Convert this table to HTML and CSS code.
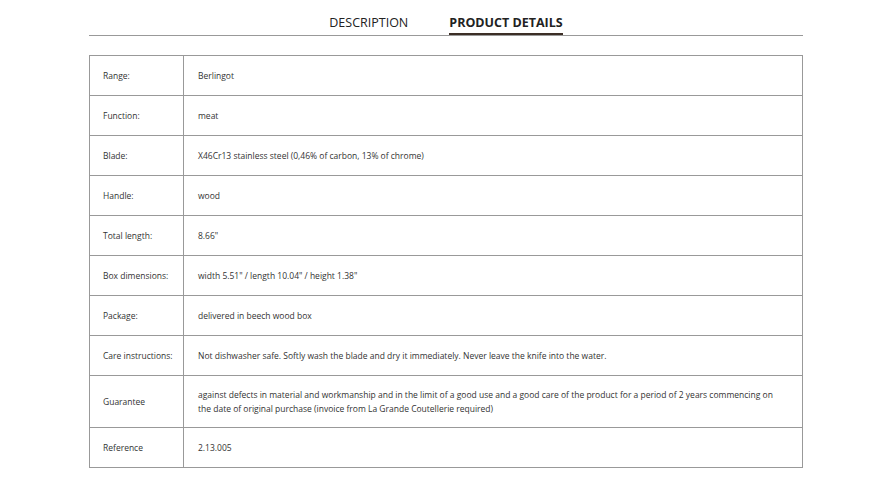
FILE: index.html
```html
<!DOCTYPE html>
<html>
<head>
	<title>Product details</title>
	<meta charset="utf-8">
	<link rel="stylesheet" href="styles.css">
</head>
<body>

	<div class="tabs">
		<span class="tab">DESCRIPTION</span>
		<span class="tab active">PRODUCT DETAILS</span>
	</div>

	<table class="details">
		<colgroup>
			<col class="label-col">
			<col>
		</colgroup>
		<tr><td class="label">Range:</td><td>Berlingot</td></tr>
		<tr><td class="label">Function:</td><td>meat</td></tr>
		<tr><td class="label">Blade:</td><td>X46Cr13 stainless steel (0,46% of carbon, 13% of chrome)</td></tr>
		<tr><td class="label">Handle:</td><td>wood</td></tr>
		<tr><td class="label">Total length:</td><td>8.66"</td></tr>
		<tr><td class="label">Box dimensions:</td><td>width 5.51" / length 10.04" / height 1.38"</td></tr>
		<tr><td class="label">Package:</td><td>delivered in beech wood box</td></tr>
		<tr><td class="label">Care instructions:</td><td>Not dishwasher safe. Softly wash the blade and dry it immediately. Never leave the knife into the water.</td></tr>
		<tr class="tall"><td class="label">Guarantee</td><td>against defects in material and workmanship and in the limit of a good use and a good care of the product for a period of 2 years commencing on the date of original purchase (invoice from La Grande Coutellerie required)</td></tr>
		<tr><td class="label">Reference</td><td>2.13.005</td></tr>
	</table>

</body>
</html>
```

FILE: styles.css
```css
* {
	box-sizing: border-box;
}

body {
	margin: 0;
	padding: 0 90px 0 89px;
	font-family: "Open Sans", "Noto Sans", sans-serif;
	color: #333;
	background: #fff;
}

.tabs {
	display: flex;
	justify-content: center;
	gap: 41px;
	padding-top: 14px;
	border-bottom: 1px solid #999;
	height: 36px;
}

.tab {
	font-size: 12.5px;
	color: #222;
	height: 21px;
}

.tab.active {
	font-weight: 700;
	border-bottom: 2px solid #3c2e26;
}

.details {
	margin-top: 19px;
	width: 100%;
	table-layout: fixed;
	border-collapse: collapse;
	font-size: 8.5px;
}

.label-col {
	width: 94px;
}

.details td {
	border: 1px solid #999;
	height: 40px;
	padding: 0 14px;
	vertical-align: middle;
	line-height: 14px;
	color: #333;
}

.details td.label {
	white-space: nowrap;
	padding: 0 0 0 13px;
}

.details tr.tall td {
	height: 52px;
	padding-right: 24px;
}
```
